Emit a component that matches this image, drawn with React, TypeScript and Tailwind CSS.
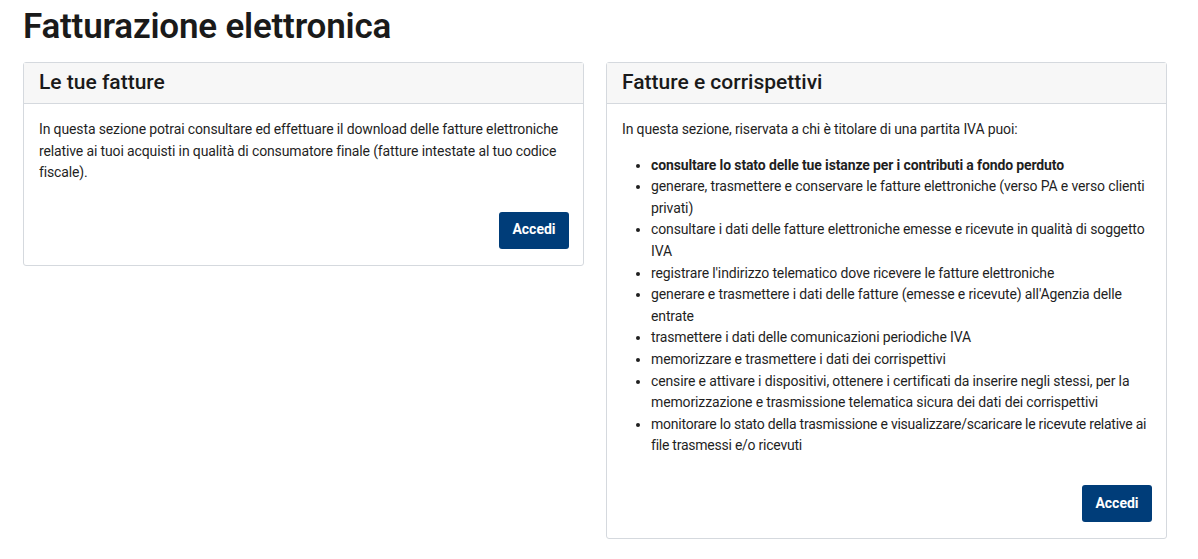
const items: { text: string; bold?: boolean; tight?: boolean }[] = [
  { text: "consultare lo stato delle tue istanze per i contributi a fondo perduto", bold: true },
  { text: "generare, trasmettere e conservare le fatture elettroniche (verso PA e verso clienti privati)" },
  { text: "consultare i dati delle fatture elettroniche emesse e ricevute in qualità di soggetto IVA" },
  { text: "registrare l'indirizzo telematico dove ricevere le fatture elettroniche" },
  { text: "generare e trasmettere i dati delle fatture (emesse e ricevute) all'Agenzia delle entrate" },
  { text: "trasmettere i dati delle comunicazioni periodiche IVA" },
  { text: "memorizzare e trasmettere i dati dei corrispettivi" },
  { text: "censire e attivare i dispositivi, ottenere i certificati da inserire negli stessi, per la memorizzazione e trasmissione telematica sicura dei dati dei corrispettivi" },
  { text: "monitorare lo stato della trasmissione e visualizzare/scaricare le ricevute relative ai file trasmessi e/o ricevuti", tight: true },
];

function Card({ title, children }: { title: string; children: React.ReactNode }) {
  return (
    <div className="rounded-[3px] border border-[#d5d9de] bg-white">
      <div className="h-[41px] border-b border-[#d5d9de] bg-[#f7f7f7] px-[15px] flex items-center">
        <h2 className="text-[21px] font-medium text-[#1a1a1a]">{title}</h2>
      </div>
      <div className="pl-[15px] pr-[14px] pt-[15px] pb-[16px]">
        {children}
        <div className="mt-[28px] flex justify-end">
          <button className="h-[37px] w-[70px] rounded-[3px] bg-[#003d79] text-[14px] font-bold text-white">
            Accedi
          </button>
        </div>
      </div>
    </div>
  );
}

export default function App() {
  return (
    <div
      className="min-h-[559px] bg-white px-[23px] pt-[6px] text-[14px] leading-[21.6px] text-[#1f1f1f]"
      style={{ fontFamily: "Roboto, 'Liberation Sans', sans-serif" }}
    >
      <h1 className="mb-[14px] text-[35px] font-semibold leading-[42px] tracking-[-0.2px] text-[#1a1a1a]">
        Fatturazione elettronica
      </h1>
      <div className="grid w-[1144px] grid-cols-2 items-start gap-[22px]">
        <Card title="Le tue fatture">
          <p className="tracking-[-0.13px]">
            In questa sezione potrai consultare ed effettuare il download delle fatture elettroniche
            relative ai tuoi acquisti in qualità di consumatore finale (fatture intestate al tuo
            codice fiscale).
          </p>
        </Card>
        <Card title="Fatture e corrispettivi">
          <p className="tracking-[-0.13px]">
            In questa sezione, riservata a chi è titolare di una partita IVA puoi:
          </p>
          <ul className="mt-[14px] list-disc pl-[29px] pr-px tracking-[-0.13px]">
            {items.map((it) => (
              <li
                key={it.text}
                className={it.bold ? "font-bold" : it.tight ? "tracking-[-0.24px]" : ""}
              >
                {it.text}
              </li>
            ))}
          </ul>
        </Card>
      </div>
    </div>
  );
}
